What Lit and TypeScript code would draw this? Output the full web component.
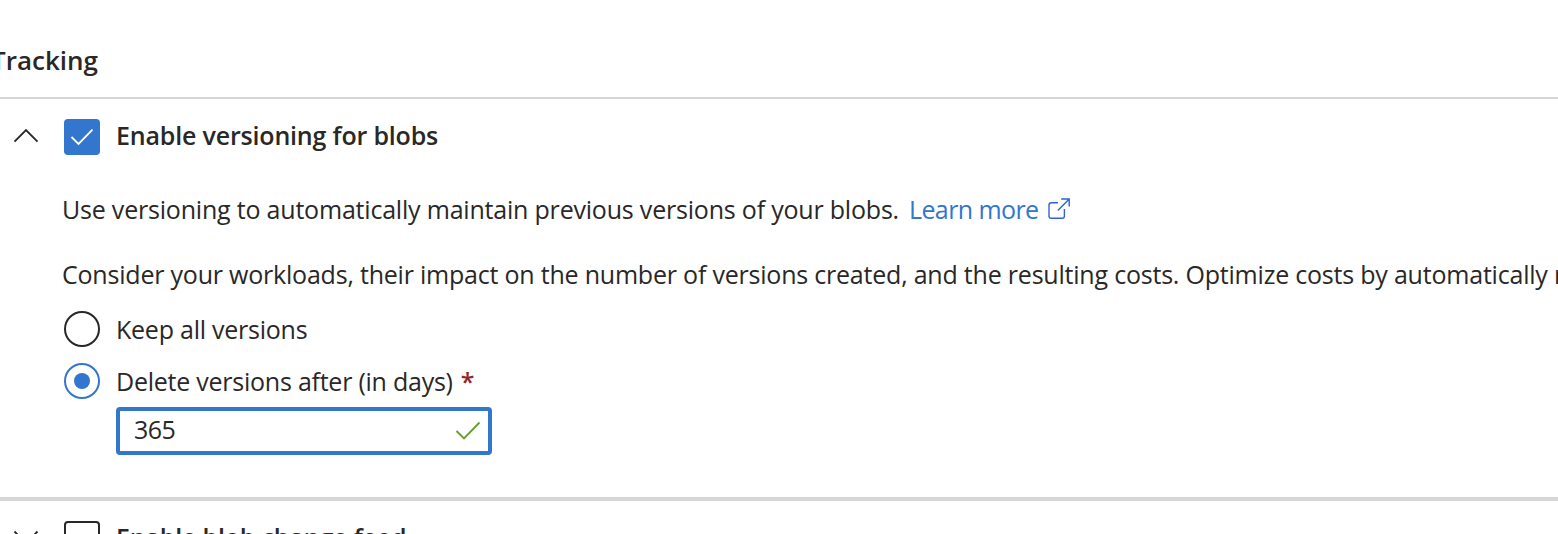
import { LitElement, html, css, svg } from "lit";
import { customElement, property } from "lit/decorators.js";

const chevron = (down: boolean) => html`<svg class="chevron" width="26" height="16" viewBox="0 0 26 16">
  ${down ? svg`<path d="M1.5 1.5L13 13.5L24.5 1.5" />` : svg`<path d="M1.5 13.6L13 2L24.5 13.6" />`}
</svg>`;

@customElement("app-root")
export class AppRoot extends LitElement {
  @property() days = "365";

  static styles = css`
    :host {
      display: flex;
      flex-direction: column;
      height: 534px;
      overflow: hidden;
      background: #fff;
      color: #292827;
      font: 400 25px/36px "Open Sans", "Noto Sans", sans-serif;
      letter-spacing: -0.21px;
      white-space: nowrap;
    }
    .group { flex: none; height: 97px; box-sizing: border-box; padding-top: 42px; }
    .group h2 { margin: 0 0 0 -9px; font-size: 26px; line-height: 36px; font-weight: 600; letter-spacing: 0; }
    .rule { flex: none; height: 2px; background: #d6d6d6; }
    .rule.thick { height: 4px; }
    .section { flex: none; height: 398px; box-sizing: border-box; padding-top: 20px; }
    .head { display: flex; align-items: center; height: 36px; padding-left: 13px; }
    .chevron { fill: none; stroke: #292827; stroke-width: 1.9; margin: 0 25px 3px 0; }
    .box { box-sizing: border-box; width: 36px; height: 36px; border: 2px solid #292827; border-radius: 4px; margin-right: 16px; }
    .box.on { border: 0; background: #3276cd; }
    .box svg { display: block; fill: none; stroke: #fff; stroke-width: 1.8; }
    .title { font-weight: 600; letter-spacing: -0.18px; padding-bottom: 5px; }
    .body { padding-left: 62px; }
    .text { margin: 0; height: 36px; }
    .use { margin-top: 36px; display: flex; }
    .use > span { letter-spacing: -0.2px; }
    .consider { margin-top: 29px; }
    .link { color: #3276cd; margin-left: 10px; display: flex; letter-spacing: -0.6px; }
    .link svg { fill: none; stroke: #2f63d8; stroke-width: 1.4; margin: 7px 0 0 10px; }
    .option { display: flex; align-items: center; height: 36px; padding-left: 2px; }
    .option span:not(.radio) { padding-bottom: 1px; letter-spacing: -0.24px; }
    .keep { margin-top: 19px; }
    .delete { margin-top: 16px; }
    .radio { box-sizing: border-box; width: 36px; height: 36px; border: 2px solid #292827; border-radius: 50%; margin-right: 16px; display: grid; place-items: center; }
    .radio.on { border-color: #3276cd; }
    .radio.on::after { content: ""; width: 16px; height: 16px; border-radius: 50%; background: #3276cd; }
    .req { color: #8f2826; margin-left: 8px; font-weight: 600; }
    .field { box-sizing: border-box; width: 376px; height: 48px; margin: 8px 0 0 54px; border: 4px solid #3276cd; border-radius: 4px; display: flex; align-items: center; justify-content: space-between; padding: 0 7px 0 14px; }
    .field span { padding-bottom: 4px; letter-spacing: -0.5px; }
    .field svg { fill: none; stroke: #63a12f; stroke-width: 1.9; }
    .next { padding-top: 20px; }
  `;

  render() {
    return html`
      <div class="group"><h2>Tracking</h2></div>
      <div class="rule"></div>
      <div class="section">
        <div class="head">
          ${chevron(false)}
          <div class="box on"><svg width="36" height="36" viewBox="0 0 36 36"><path d="M7.5 18L14.5 25L28.5 10.7" /></svg></div>
          <span class="title">Enable versioning for blobs</span>
        </div>
        <div class="body">
          <p class="text use"><span>Use versioning to automatically maintain previous versions of your blobs.</span>
            <a class="link"><span>Learn more</span><svg width="22" height="22" viewBox="0 0 22 22"><path d="M10 4.8H3.2Q1 4.8 1 7V18Q1 20.2 3.2 20.2H14.2Q16.4 20.2 16.4 18V11M9.8 12.6L21 1.2M13.2 1H21.2V8.6" /></svg></a></p>
          <p class="text consider">Consider your workloads, their impact on the number of versions created, and the resulting costs. Optimize costs by automatically removing</p>
          <div class="option keep"><span class="radio"></span><span>Keep all versions</span></div>
          <div class="option delete"><span class="radio on"></span><span>Delete versions after (in days)</span><span class="req">*</span></div>
          <div class="field"><span>${this.days}</span><svg width="26" height="20" viewBox="0 0 26 20"><path d="M1.5 10L9 17.5L24.5 1.5" /></svg></div>
        </div>
      </div>
      <div class="rule thick"></div>
      <div class="next"><div class="head">${chevron(true)}<div class="box"></div><span class="title">Enable blob change feed</span></div></div>
    `;
  }
}
